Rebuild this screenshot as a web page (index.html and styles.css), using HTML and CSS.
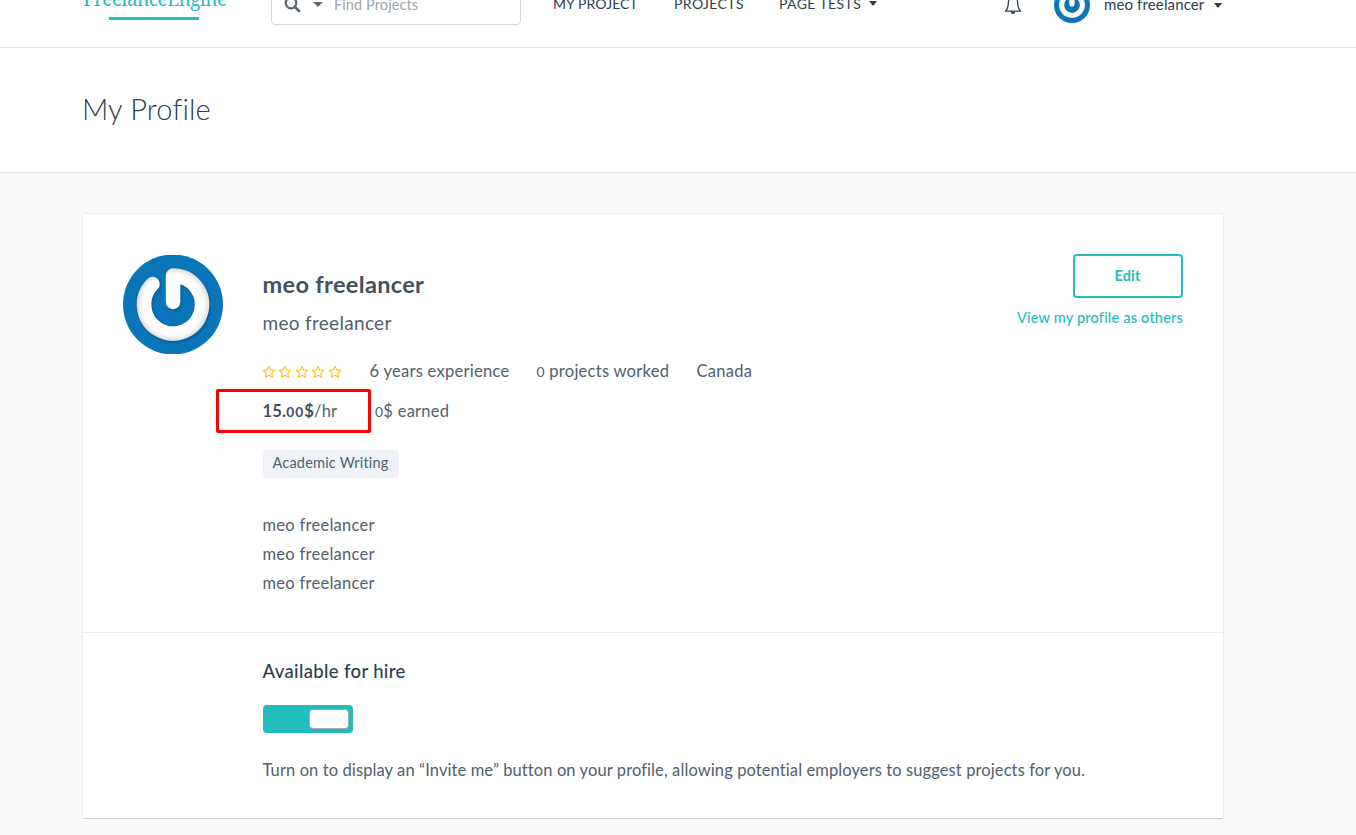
FILE: index.html
```
<!DOCTYPE html>
<html lang="en">
<head>
<meta charset="utf-8">
<title>My Profile - FreelanceEngine</title>
<link rel="stylesheet" href="styles.css">
</head>
<body>
<svg width="0" height="0" class="defs">
  <defs>
    <radialGradient id="shade" gradientUnits="userSpaceOnUse" cx="50" cy="50" r="36">
      <stop offset="0.6" stop-color="#fff"/>
      <stop offset="0.86" stop-color="#fcfcfc"/>
      <stop offset="1" stop-color="#dedede"/>
    </radialGradient>
    <filter id="soft" x="-20%" y="-20%" width="150%" height="150%">
      <feDropShadow dx="1" dy="1.5" stdDeviation="1.4" flood-color="#003a66" flood-opacity=".6"/>
    </filter>
    <symbol id="power" viewBox="0 0 100 100">
      <circle cx="50" cy="50" r="50" fill="#0a76b9"/>
      <path d="M29.5 29.5A29 29 0 1 0 50 21V47.5" fill="none" stroke="url(#shade)" stroke-width="14.4" stroke-linecap="round" stroke-linejoin="round" filter="url(#soft)"/>
    </symbol>
    <symbol id="star" viewBox="0 0 14 14">
      <path d="M7 1.3l1.75 3.6 3.95.55-2.85 2.8.7 3.95L7 10.35 3.45 12.2l.7-3.95L1.3 5.45l3.95-.55z" fill="none" stroke="#fbc02d" stroke-width="1.1" stroke-linejoin="round"/>
    </symbol>
  </defs>
</svg>
<header class="header">
  <div class="container header-row">
    <a class="logo"><span class="logo-name">FreelanceEngine</span><span class="logo-bar"></span></a>
    <div class="search">
      <svg class="search-icon" width="17" height="17" viewBox="0 0 17 17"><circle cx="7" cy="7" r="5.3" fill="none" stroke="#5c6873" stroke-width="2.3"/><path d="M11 11l4 4" stroke="#5c6873" stroke-width="2.8" stroke-linecap="round"/></svg>
      <span class="caret caret-gray"></span>
      <span class="placeholder">Find Projects</span>
    </div>
    <nav class="nav">
      <a class="nav-first">MY PROJECT</a>
      <a class="nav-second">PROJECTS</a>
      <a class="nav-third">PAGE TESTS</a>
      <span class="caret"></span>
    </nav>
    <div class="account">
      <svg class="bell" width="18" height="22" viewBox="0 0 18 22"><path d="M1.5 18.2C4 15.7 4.3 13 4.5 8.500C4.700 5 6.500 3.500 9 3.500S13.300 5 13.500 8.500C13.700 13 14 15.700 16.500 18.200z" fill="none" stroke="#2c3e50" stroke-width="1.3" stroke-linejoin="round"/><path d="M6.800 18.800a2.200 2.200 0 0 0 4.400 0z" fill="#2c3e50"/></svg>
      <svg class="avatar-small" width="36" height="36"><use href="#power"/></svg>
      <span class="user">meo freelancer</span>
      <span class="caret"></span>
    </div>
  </div>
</header>
<section class="title-band">
  <h1 class="container title">My Profile</h1>
</section>
<main class="card">
  <section class="profile">
    <svg class="avatar" width="100" height="99" viewBox="0 .5 100 99"><use href="#power" width="100" height="100"/></svg>
    <div class="info">
      <h2 class="name">meo freelancer</h2>
      <p class="role">meo freelancer</p>
      <div class="stats">
        <span class="stars"><svg><use href="#star"/></svg><svg><use href="#star"/></svg><svg><use href="#star"/></svg><svg><use href="#star"/></svg><svg><use href="#star"/></svg></span>
        <span class="years">6 years experience</span>
        <span class="worked"><span class="zero">0</span> projects worked</span>
        <span class="country">Canada</span>
      </div>
      <div class="rates">
        <span class="rate"><b>15.<span class="zero">00</span>$</b>/hr</span>
        <span class="earned"><span class="zero">0</span>$ earned</span>
        <span class="highlight"></span>
      </div>
      <span class="tag">Academic Writing</span>
      <div class="bio"><p>meo freelancer</p><p>meo freelancer</p><p>meo freelancer</p></div>
    </div>
    <div class="actions">
      <button class="edit">Edit</button>
      <a class="view">View my profile as others</a>
    </div>
  </section>
  <section class="hire">
    <h3 class="hire-title">Available for hire</h3>
    <div class="switch"><span class="knob"></span></div>
    <p class="hire-note">Turn on to display an “Invite me” button on your profile, allowing potential employers to suggest projects for you.</p>
  </section>
</main>
</body>
</html>
```
FILE: styles.css
```
* { box-sizing: border-box; }
body { margin: 0; height: 835px; overflow: hidden; background: #f9f9f9; color: #50606e; font: 16.5px/29px Lato, sans-serif; }
h1, h2, h3, p { margin: 0; font-weight: 400; }
.defs { position: absolute; }
.container { width: 1140px; margin-left: 83px; }
.header { height: 85px; margin-top: -37px; background: #fff; border-bottom: 1px solid #e7e7e7; }
.header-row { display: flex; align-items: center; height: 84px; color: #2c3e50; font-size: 14px; white-space: nowrap; }
.logo { display: flex; flex-direction: column; align-items: center; width: 144px; margin-top: -4px; color: #22bebe; }
.logo-name { font: 19px/26px "Noto Serif", "DejaVu Serif", serif; letter-spacing: -.55px; }
.logo-bar { width: 90px; height: 3px; margin: 5px 0 0 -2px; background: #22bebe; }
.search { display: flex; align-items: center; width: 250px; height: 40px; margin-left: 44px; padding-left: 12px; border: 1px solid #d6d6d6; border-radius: 4px; }
.search-icon { margin-top: -2px; }
.placeholder { margin: -2px 0 0 11px; color: #a0a5aa; font-size: 14.5px; letter-spacing: .1px; }
.caret { width: 0; border: 4.5px solid transparent; border-top: 5px solid #2c3e50; border-bottom: 0; }
.caret-gray { margin: -1px 0 0 12px; border-width: 5px 5px 0; border-top-color: #5c6873; }
.nav { display: flex; align-items: center; width: 325px; margin-left: 32px; margin-top: -3px; }
.nav-first { width: 121px; letter-spacing: .1px; }
.nav-second { width: 105px; letter-spacing: .4px; }
.nav-third { width: 90px; letter-spacing: .4px; }
.account { display: flex; align-items: center; margin-left: 126px; }
.bell { margin-top: -3px; }
.avatar-small { margin-left: 32px; }
.user { width: 100px; margin: -2px 10px 0 14px; font-size: 15px; letter-spacing: .13px; }
.title-band { height: 125px; padding-top: 41px; background: #fff; border-bottom: 1px solid #e5e5e5; }
.title { margin-left: 82px; color: #2c3e50; font-size: 29px; line-height: 40px; font-weight: 300; letter-spacing: .15px; }
.card { width: 1142px; height: 606px; margin: 40px 0 0 82px; background: #fff; border: 1px solid #ededed; border-bottom-color: #ccc; border-radius: 2px; }
.profile { display: flex; height: 419px; padding: 40px 40px 0 40px; border-bottom: 1px solid #ededed; }
.avatar { flex: none; margin-top: 1px; }
.info { flex: 1; margin-left: 39.5px; padding-top: 14px; white-space: nowrap; letter-spacing: .27px; }
.name { color: #425060; font-size: 23.5px; line-height: 32px; font-weight: 700; letter-spacing: .35px; }
.role { margin-top: 9px; font-size: 19px; line-height: 28px; letter-spacing: .3px; }
.stats { display: flex; margin-top: 20px; }
.stars { display: flex; gap: 2.6px; width: 108px; margin-left: -1px; padding-top: 7.5px; }
.stars svg { width: 14px; height: 14px; }
.years { width: 167px; }
.worked { width: 160px; }
.zero { font-size: .84em; }
.rates { position: relative; display: flex; margin-top: 11px; margin-bottom: -1px; }
.rate { width: 112.5px; letter-spacing: .2px; }
.rate b { color: #425060; }
.rate .zero { letter-spacing: 1px; }
.highlight { position: absolute; left: -46.5px; top: -8px; width: 155px; height: 44px; border: 3px solid #ff0000; border-radius: 2px; }
.tag { display: block; width: 136px; height: 28px; margin-top: 25px; padding-left: 10px; background: #eff3f7; border-radius: 4px; font-size: 14.5px; line-height: 26px; letter-spacing: .2px; }
.bio { margin-top: 33px; }
.actions { display: flex; flex-direction: column; align-items: flex-end; color: #22bebe; }
.edit { width: 110px; height: 44px; padding: 0 1px 2px 0; background: #fff; border: 2px solid #22bebe; border-radius: 4px; color: #22bebe; font: 700 14.5px Lato, sans-serif; letter-spacing: .2px; }
.view { margin-top: 5px; font-size: 14.5px; font-weight: 500; letter-spacing: .2px; }
.hire { padding: 23px 0 0 179.5px; white-space: nowrap; }
.hire-title { color: #2c3e50; font-size: 18.5px; line-height: 30px; font-weight: 500; letter-spacing: .35px; }
.switch { display: flex; justify-content: flex-end; align-items: center; width: 90px; height: 28px; margin-top: 19px; padding-right: 4px; background: #22bebe; border-radius: 4px; }
.knob { width: 40px; height: 20px; background: #fff; border: 1px solid #aaa; border-radius: 4px; }
.hire-note { margin-top: 23px; letter-spacing: .1px; }
```
